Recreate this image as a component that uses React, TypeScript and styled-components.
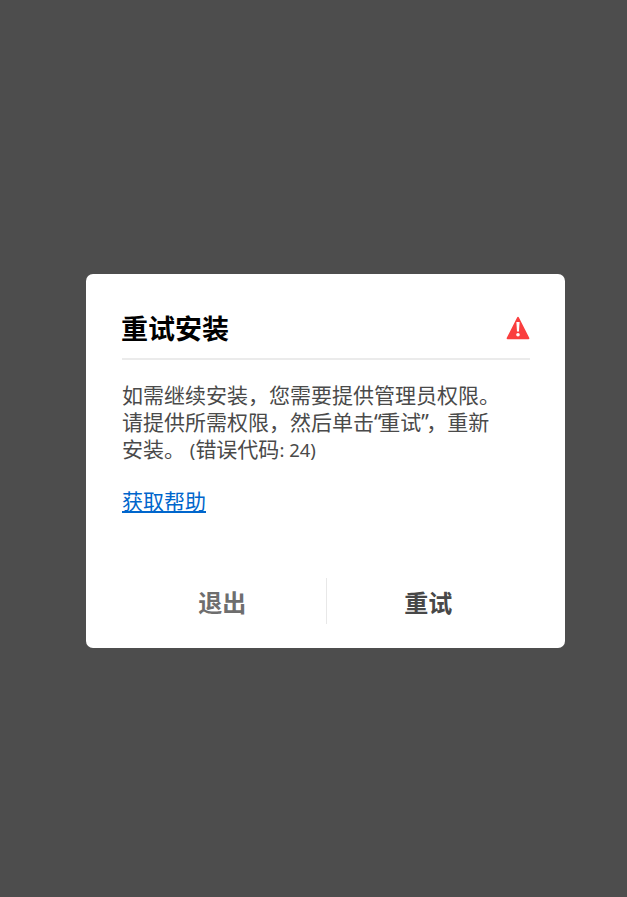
import React from "react";
import styled, { createGlobalStyle } from "styled-components";

const GlobalStyle = createGlobalStyle`
  html, body {
    margin: 0;
    padding: 0;
    height: 100%;
    background: #4d4d4d;
  }
  body {
    font-family: "Noto Sans", "Noto Sans CJK SC", sans-serif;
  }
`;

const Page = styled.div`
  width: 627px;
  height: 897px;
  box-sizing: border-box;
  padding: 274px 0 0 86px;
  background: #4d4d4d;
  overflow: hidden;
`;

const Dialog = styled.div`
  width: 479px;
  height: 374px;
  box-sizing: border-box;
  padding: 36px 35px 24px 36px;
  background: #ffffff;
  border-radius: 7px;
  display: flex;
  flex-direction: column;
`;

const Header = styled.div`
  display: flex;
  align-items: flex-start;
  justify-content: space-between;
  height: 48px;
  border-bottom: 2px solid #ebebeb;
`;

const Title = styled.h1`
  margin: 0 0 0 -1px;
  font-size: 27px;
  line-height: 38px;
  font-weight: 700;
  color: #000000;
`;

const Body = styled.div`
  flex: 1;
  padding-top: 22px;
  font-size: 21px;
  line-height: 27px;
  color: #4a4a4a;
`;

const Message = styled.p`
  margin: 0 0 25px;
  width: 385px;
`;

const Latin = styled.span`
  font-size: 18.5px;
`;

const Quote = styled.span`
  letter-spacing: -2.4px;
`;

const HelpLink = styled.a`
  color: #0066cc;
  text-decoration: underline;
`;

const Footer = styled.div`
  display: grid;
  grid-template-columns: 1fr 1px 1fr;
  height: 46px;
`;

const ActionButton = styled.button<{ $primary?: boolean }>`
  height: 100%;
  padding: 0 ${(props) => (props.$primary ? "0" : "3px")} 0 0;
  border: none;
  background: transparent;
  font-family: inherit;
  font-size: 24px;
  font-weight: 700;
  color: ${(props) => (props.$primary ? "#484848" : "#6e6e6e")};
  cursor: pointer;
`;

const Divider = styled.div`
  height: 100%;
  background: #e8e8e8;
`;

const WarningSvg = styled.svg`
  margin-top: 6px;
  flex: none;
`;

const WarningIcon = () => (
  <WarningSvg width="24" height="24" viewBox="0 0 24 24" aria-hidden="true">
    <path
      d="M12 0.8 C12.4 0.8 12.7 1 12.9 1.4 L23.2 21.8 C23.6 22.6 23.2 23.2 22.4 23.2 L1.6 23.2 C0.8 23.2 0.4 22.6 0.8 21.8 L11.1 1.4 C11.3 1 11.6 0.8 12 0.8 Z"
      fill="#fa3e3e"
    />
    <path d="M10.4 6 H13.6 L13 15.5 H11 Z" fill="#ffffff" />
    <circle cx="12" cy="18.8" r="1.8" fill="#ffffff" />
  </WarningSvg>
);

export default function App() {
  return (
    <>
      <GlobalStyle />
      <Page>
        <Dialog>
          <Header>
            <Title>重试安装</Title>
            <WarningIcon />
          </Header>
          <Body>
            <Message>
              如需继续安装，您需要提供管理员权限。请提供所需权限，然后单击<Quote>“</Quote>重试<Quote>”</Quote>，重新安装。<Latin> (</Latin>错误代码<Latin>: 24)</Latin>
            </Message>
            <HelpLink href="#">获取帮助</HelpLink>
          </Body>
          <Footer>
            <ActionButton>退出</ActionButton>
            <Divider />
            <ActionButton $primary>重试</ActionButton>
          </Footer>
        </Dialog>
      </Page>
    </>
  );
}
